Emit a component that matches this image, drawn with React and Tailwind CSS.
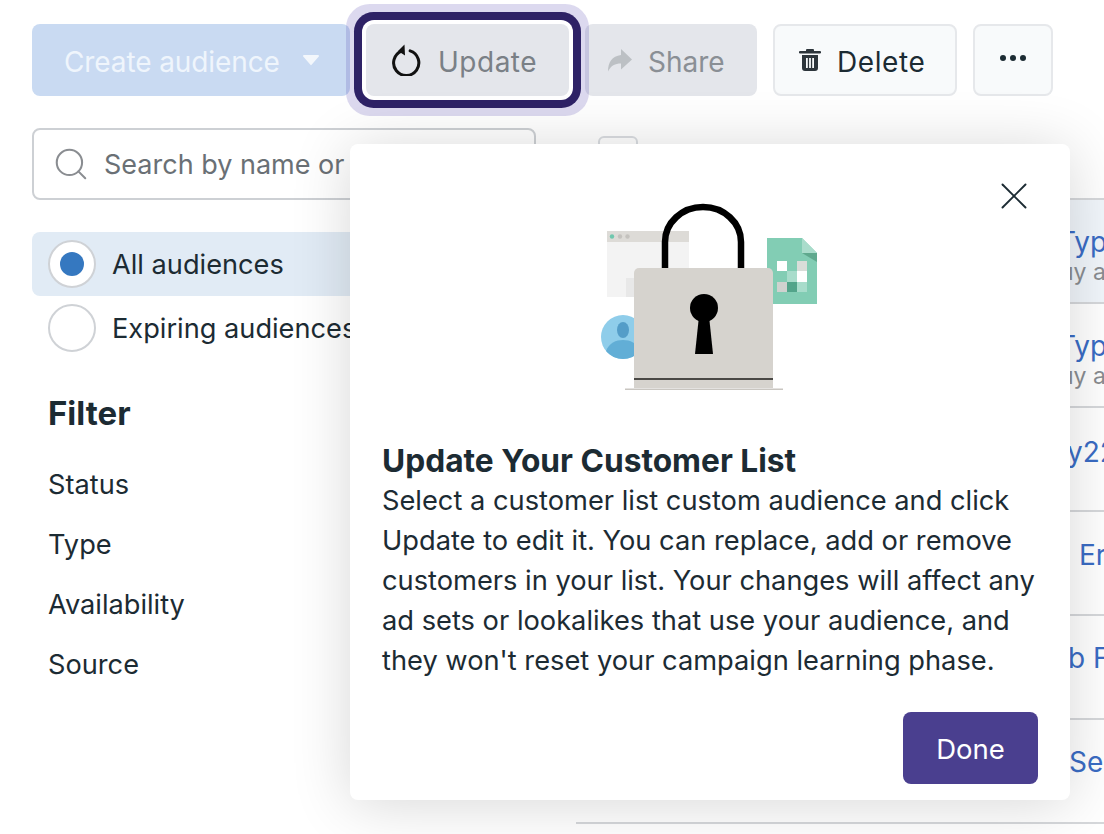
import { Search, X } from 'lucide-react';

const rows = [
  { text: 'Typ', sub: 'uy a', pad: 'pl-[482px]', bg: 'bg-[#f1f6fb]', top: 'pt-6' },
  { text: 'Typ', sub: 'uy a', pad: 'pl-[482px]', bg: 'bg-white', top: 'pt-6' },
  { text: 'y22', pad: 'pl-[491px]', bg: 'bg-white', top: 'pt-[26px]' },
  { text: 'Er', pad: 'pl-[503px]', bg: 'bg-white', top: 'pt-[25px]' },
  { text: 'b F', pad: 'pl-[492px]', bg: 'bg-white', top: 'pt-6' },
  { text: 'Se', pad: 'pl-[493px]', bg: 'bg-white', top: 'pt-6' },
];

function UpdateIcon() {
  return (
    <svg viewBox="0 0 32 32" className="w-8 h-8" fill="none">
      <path d="M11.5 7.2a12.6 12.600 0 1 0 8.6-.3" stroke="#111" strokeWidth="3" strokeLinecap="round" />
      <path d="M14.500 0.500L8 7l7 4.500z" fill="#111" />
    </svg>
  );
}

function ShareIcon() {
  return (
    <svg viewBox="0 0 26 24" className="w-[26px] h-6">
      <path d="M14 1l11 10.500-11 10v-6c-6 0-10 2-13 8 0-9 4-15.500 13-16.500z" fill="#bcc0c4" />
    </svg>
  );
}

function TrashIcon() {
  return (
    <svg viewBox="0 0 22 24" className="w-[22px] h-6" fill="#2d353b">
      <path d="M8 1h6a1 1 0 0 1 1 1v1h6a1 1 0 0 1 0 2.400H1A1 1 0 0 1 1 3h6V2a1 1 0 0 1 1-1z" />
      <path fillRule="evenodd" d="M3 7h16v13a3 3 0 0 1-3 3H6a3 3 0 0 1-3-3zm4 3v10h1.800V10zm3.100 0v10h1.800V10zm3.100 0v10H15V10z" />
    </svg>
  );
}

function LockArt() {
  return (
    <svg viewBox="600 200 224 195" className="w-[224px] h-[195px] ml-[250px] mt-[56px]">
      <rect x="607" y="231" width="82" height="66" fill="#f3f3f3" />
      <rect x="607" y="231" width="82" height="11" fill="#dddbd7" />
      <rect x="626" y="278" width="30" height="19" fill="#e8e8e8" />
      <circle cx="612" cy="236.500" r="2.200" fill="#6fc7ae" />
      <circle cx="620" cy="236.500" r="2.200" fill="#c4c2be" />
      <circle cx="627.500" cy="236.500" r="2.200" fill="#c4c2be" />
      <circle cx="623" cy="337" r="22" fill="#8fcdea" />
      <path d="M606 351c3-8 10-11 17-11s14 3 17 11a22 22 0 0 1-34 0z" fill="#62aed6" />
      <ellipse cx="623" cy="330" rx="6" ry="8" fill="#549dc8" />
      <path d="M767 238h35l15 15v51h-50z" fill="#82cdb4" />
      <path d="M802 238l15 15h-15z" fill="#a9dccb" />
      <path d="M802 253h15v9z" fill="#5fa98e" />
      <rect x="777" y="261" width="10" height="10" fill="#fff" />
      <rect x="797" y="261" width="10" height="10" fill="#d9ddd9" />
      <rect x="787" y="271" width="10" height="11" fill="#a8dccb" />
      <rect x="797" y="271" width="10" height="11" fill="#fff" />
      <rect x="777" y="282" width="10" height="10" fill="#cfd2cf" />
      <rect x="787" y="282" width="10" height="10" fill="#52a48a" />
      <rect x="797" y="282" width="10" height="10" fill="#a8dccb" />
      <path d="M665 270v-28a38 35 0 0 1 76 0v28" fill="none" stroke="#000" strokeWidth="6.500" />
      <path d="M634 273a5 5 0 0 1 5-5h129a5 5 0 0 1 5 5v115H634z" fill="#d6d3ce" />
      <rect x="634" y="378" width="139" height="2" fill="#4a4845" />
      <rect x="625" y="388.500" width="158" height="1.500" fill="#c9c6c1" />
      <circle cx="704" cy="308" r="14" fill="#000" />
      <path d="M699 316h10l4 38h-18z" fill="#000" />
    </svg>
  );
}

export default function App() {
  return (
    <div className="relative w-[1104px] h-[834px] overflow-hidden bg-white font-['Inter',sans-serif] text-[#1c2b33]">
      {/* Toolbar */}
      <div className="flex gap-4 pl-8 pt-6 text-[28px]">
        <button className="flex items-center gap-[22px] w-[318px] h-[72px] pl-8 rounded-lg bg-[#c9daf2] text-[#eff5fc]">
          <span className="pt-1 tracking-[-0.1px]">Create audience</span>
          <svg viewBox="0 0 18 12" className="w-[18px] h-3"><path d="M2 1h14a1 1 0 0 1 .8 1.600l-7 8a1 1 0 0 1-1.600 0l-7-8A1 1 0 0 1 2 1z" fill="#f3f7fc" /></svg>
        </button>
        <button className="relative z-10 flex items-center gap-4 w-[203px] h-[72px] pl-6 rounded-lg bg-[#e4e6eb] text-[#7a8086] shadow-[0_0_0_4px_#fff,0_0_0_12px_#2e2266,0_0_0_20px_rgba(80,65,175,0.2)]">
          <UpdateIcon />
          <span className="pt-1 tracking-[0.5px]">Update</span>
        </button>
        <button className="flex items-center gap-[15px] w-[172px] h-[72px] pl-[22px] rounded-lg bg-[#e4e6eb] text-[#8a8f95]">
          <ShareIcon />
          <span className="pt-1">Share</span>
        </button>
        <button className="flex items-center gap-4 w-[184px] h-[72px] pl-6 rounded-lg border-2 border-[#e6e8eb] bg-[#f8fafb]">
          <TrashIcon />
          <span className="pt-1 tracking-[0.6px]">Delete</span>
        </button>
        <button className="flex items-center justify-center gap-1 w-20 h-[72px] pb-1 rounded-lg border-2 border-[#e6e8eb] bg-[#f8fafb]">
          <span className="w-1.5 h-1.5 rounded-full bg-[#1c2b33]" />
          <span className="w-1.5 h-1.5 rounded-full bg-[#1c2b33]" />
          <span className="w-1.5 h-1.5 rounded-full bg-[#1c2b33]" />
        </button>
      </div>

      <div className="flex mt-8">
        {/* Sidebar */}
        <div className="w-[504px] ml-8 shrink-0">
          <div className="flex items-center gap-[14px] h-[72px] pl-[18px] pr-6 rounded-lg border-2 border-[#cdd0d4] text-[27px] text-[#6a7075]">
            <Search className="w-[38px] h-[38px] text-[#8a8d91] shrink-0" strokeWidth={1.3} />
            <span className="pt-0.5">Search by name or ID</span>
          </div>
          <div className="flex items-center gap-4 h-16 mt-8 px-4 rounded-lg bg-[#e1ebf5] text-[27.200px]">
            <span className="flex items-center justify-center w-12 h-12 rounded-full border-2 border-[#cfd2d6] bg-white">
              <span className="w-6 h-6 rounded-full bg-[#3578c0]" />
            </span>
            <span className="pt-0.5">All audiences</span>
          </div>
          <div className="flex items-center gap-4 h-16 px-4 text-[27.200px]">
            <span className="w-12 h-12 rounded-full border-2 border-[#cfd2d6] bg-white" />
            <span className="pt-0.5">Expiring audiences</span>
          </div>
          <div className="mt-[33px] px-4 text-[33px] leading-10 font-bold">Filter</div>
          <div className="mt-[22px] px-4 text-[27.200px]">
            <div className="h-[60px] leading-[60px]">Status</div>
            <div className="h-[60px] leading-[60px]">Type</div>
            <div className="h-[60px] leading-[60px]">Availability</div>
            <div className="h-[60px] leading-[60px]">Source</div>
          </div>
        </div>

        {/* Audience table, mostly covered by the popover */}
        <div className="flex-1 ml-10 pt-2 min-w-0">
          <div className="w-10 h-10 ml-[22px] rounded-md border-2 border-[#dadde1] mb-[22px]" />
          {rows.map((row, i) => (
            <div key={i} className={`h-[104px] ${row.bg} ${row.top} overflow-hidden border-t-2 border-[#d6d8db] whitespace-nowrap`}>
              <div className={`${row.pad} text-[28px] leading-9 text-[#3a6cc4]`}>{row.text}</div>
              {row.sub && <div className="pl-[484px] text-[23px] leading-6 text-[#8a8d91]">{row.sub}</div>}
            </div>
          ))}
          <div className="border-t-2 border-[#d6d8db]" />
        </div>
      </div>

      {/* Popover */}
      <div className="absolute z-20 left-[350px] top-[144px] w-[720px] h-[656px] rounded-lg bg-white shadow-[0_4px_60px_rgba(0,0,0,0.16)]">
        <button className="absolute top-[29px] right-[33px] text-[#1c2b33]">
          <X className="w-[46px] h-[46px]" strokeWidth={1} />
        </button>
        <LockArt />
        <div className="mt-[46px] px-8">
          <h2 className="text-[31.700px] leading-10 font-bold">Update Your Customer List</h2>
          <p className="text-[27.250px] leading-10">
            Select a customer list custom audience and click Update to edit it. You can replace, add or remove customers in your list. Your changes will affect any ad sets or lookalikes that use your audience, and they won't reset your campaign learning phase.
          </p>
        </div>
        <div className="flex justify-end mt-[31px] pr-8">
          <button className="w-[135px] h-[72px] rounded-lg bg-[#4a3f8f] text-white text-[27.500px]">
            <span className="block pt-1">Done</span>
          </button>
        </div>
      </div>
    </div>
  );
}
